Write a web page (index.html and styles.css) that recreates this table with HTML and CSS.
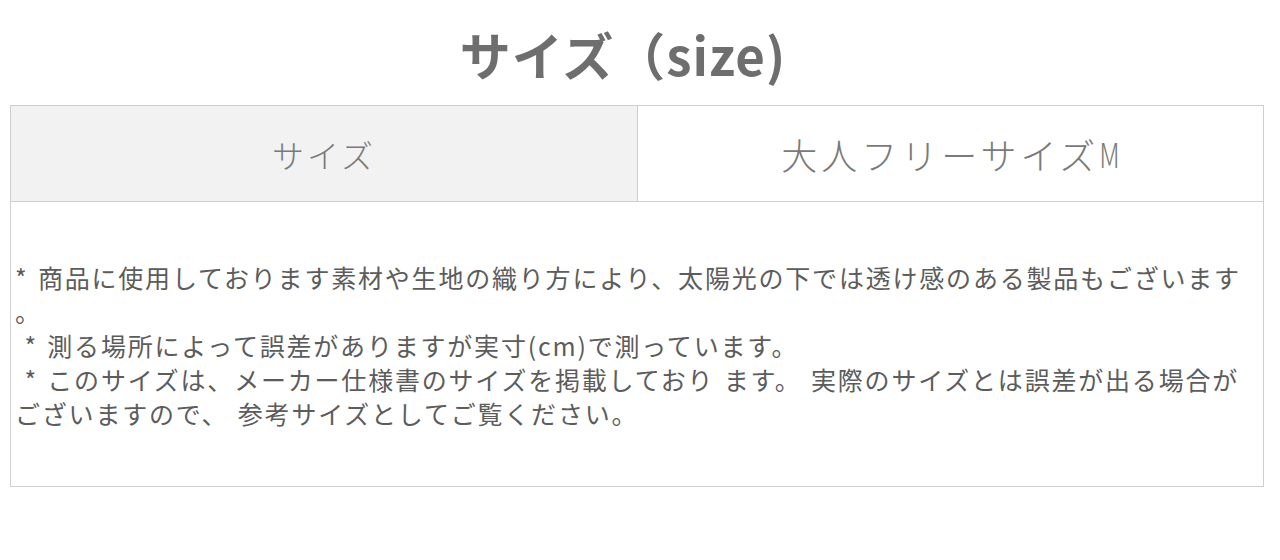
FILE: index.html
```html
<!DOCTYPE html>
<html lang="ja">
<head>
<meta charset="utf-8">
<link rel="stylesheet" href="styles.css">
</head>
<body>
<div class="page">
  <h1 class="title">サイズ（size)</h1>
  <div class="table">
    <div class="row head">
      <div class="cell label">サイズ</div>
      <div class="cell value">大人フリーサイズ<span class="m">M</span></div>
    </div>
    <div class="notes">
      <p>* 商品に使用しております素材や生地の織り方により、太陽光の下では透け感のある製品もございます<br>。</p>
      <p>&nbsp;* 測る場所によって誤差がありますが実寸(cm)で測っています。</p>
      <p>&nbsp;* このサイズは、メーカー仕様書のサイズを掲載しており ます。 実際のサイズとは誤差が出る場合が<br>ございますので、 参考サイズとしてご覧ください。</p>
    </div>
  </div>
</div>
</body>
</html>
```
FILE: styles.css
```css
html, body {
  margin: 0;
  padding: 0;
  background: #fff;
}
.page {
  width: 1280px;
  height: 560px;
  font-family: "Noto Sans CJK JP", "Noto Sans", sans-serif;
}
.title {
  margin: 0;
  height: 105px;
  display: flex;
  align-items: center;
  justify-content: center;
  padding-right: 34px;
  padding-top: 2px;
  box-sizing: border-box;
  font-size: 51px;
  font-weight: 700;
  color: #6e6e6e;
  letter-spacing: 1px;
}
.table {
  margin-left: 10px;
  width: 1254px;
  border: 1px solid #cfcfcf;
  box-sizing: border-box;
}
.row {
  display: flex;
  height: 95px;
  border-bottom: 1px solid #cfcfcf;
}
.cell {
  display: flex;
  align-items: center;
  justify-content: center;
  color: #7a7a7a;
  font-weight: 300;
}
.label {
  width: 626px;
  background: #f2f2f2;
  border-right: 1px solid #cfcfcf;
  font-size: 32px;
  letter-spacing: 3px;
}
.value {
  flex: 1;
  font-size: 36px;
  letter-spacing: 4px;
}
.m {
  font-size: 26px;
  letter-spacing: 0;
  transform: scaleY(1.3);
  display: inline-block;
}
.notes {
  height: 284px;
  box-sizing: border-box;
  padding: 58px 4px 0 4px;
  font-size: 25px;
  letter-spacing: 1.8px;
  word-spacing: 2px;
  line-height: 34px;
  color: #5c5c5c;
  white-space: nowrap;
}
.notes p {
  margin: 0;
}
```
